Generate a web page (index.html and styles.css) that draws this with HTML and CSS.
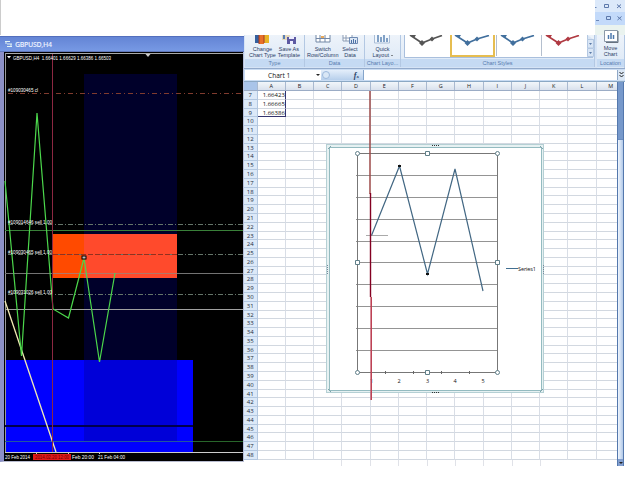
FILE: index.html
```html
<!DOCTYPE html>
<html lang="en">
<head>
    <meta charset="UTF-8">
    <meta name="viewport" content="width=device-width, initial-scale=1.0">
    <title>GBPUSD,H4 - Chart 1</title>
    <link rel="stylesheet" href="styles.css">
</head>
<body>

    <div class="top">
        <div class="corner">
            <svg width="30" height="35" viewBox="595 0 30 35">
                <rect x="595" y="0" width="30" height="12" fill="#dce9fa"/>
                <rect x="595" y="12" width="30" height="13" fill="#c3dafa"/>
                <rect x="595" y="25" width="30" height="10" fill="#eaf3ef"/>
                <path d="M595 7.500h1.500M596 20.500h3" stroke="#6c87b8"/>
                <g fill="none" stroke="#5c78ab">
                    <path d="M604.500 4.500h4v3h-4zM617 4.500l4 3.500m0-3.500l-4 3.500"/>
                    <path d="M606.500 16.500h4v3h-4zM617.500 16.500l4 3.500m0-3.500l-4 3.500"/>
                </g>
            </svg>
        </div>
    </div>

    <div class="desktop">
        <div class="terminal">
            <div class="terminal-title">
                <svg width="8" height="8" viewBox="0 0 8 8"><path d="M0 1.500h5M2 4h5M2 6.500h5M1 1v3M6 4v3" stroke="#e4f4f4" fill="none"/></svg>
                <span>GBPUSD,H4</span>
            </div>
            <svg class="forex" width="239" height="409" viewBox="4 52 239 409">
                <rect x="4" y="52" width="239" height="410" fill="#000"/>
                <rect x="84" y="74" width="93" height="287" fill="#00002a"/>
                <rect x="5" y="360" width="188" height="92" fill="#0000ff"/>
                <rect x="84" y="360" width="93" height="81" fill="#0000d8"/>
                <rect x="53" y="234" width="31" height="44" fill="#ff4a00"/>
                <rect x="84" y="234" width="93" height="44" fill="#ff4a2c"/>
                <path d="M5 53.500H243" stroke="#aaa"/>
                <path d="M5.500 53V452" stroke="#999"/>
                <path d="M145.500 54h5l-2.500 3z" fill="#ccc"/>
                <path d="M7 56h4l-2 2.500z" fill="#fff"/>
                <path d="M5 426H193" stroke="#00004c" stroke-width="2"/>
                <path d="M5 441.500H193" stroke="#24579d"/>
                <path d="M193 441.500H243" stroke="#28652a"/>
                <path d="M5 230.500H243" stroke="#398039"/>
                <path d="M5 273.500H243" stroke="#737373"/>
                <path d="M53 273.500H177" stroke="#b37768"/>
                <path d="M5 309.500H243" stroke="#a0a0a0"/>
                <path d="M8 93.500H243" stroke="#803b2e" stroke-dasharray="5 3 1 3"/>
                <path d="M8 224.500H243M8 254.500H243M8 294.500H243" stroke="#65756a" stroke-dasharray="5 2 1 2"/>
                <path d="M53 254.500H177" stroke="#91301e" stroke-dasharray="5 2"/>
                <path d="M5 301L56 452" stroke="#f2ebb4" stroke-width="1.300" fill="none"/>
                <path d="M5 181L21.500 356L37 113L53 309L68.500 318L84 258L99.500 362L115 273" stroke="#4cd84c" stroke-width="1.200" fill="none"/>
                <path d="M52.500 54V452" stroke="#8c2842"/>
                <rect x="82" y="256" width="4" height="3" fill="#bbb" stroke="#000"/>
                <path d="M5 452.500H243" stroke="#ccc"/>
                <path d="M36.500 452v2M68.500 452v2M99.500 452v2" stroke="#ccc"/>
                <g class="forex-text">
                    <text x="13" y="59.500" textLength="98" lengthAdjust="spacingAndGlyphs">GBPUSD,H4&#160; 1.66401 1.66629 1.66386 1.66503</text>
                    <text x="8" y="92" textLength="30" lengthAdjust="spacingAndGlyphs">#109030465 cl</text>
                    <text x="8" y="223.500" textLength="44" lengthAdjust="spacingAndGlyphs">#109014646 sell 1.00</text>
                    <text x="8" y="253.500" textLength="44" lengthAdjust="spacingAndGlyphs">#109030465 sell 1.00</text>
                    <text x="8" y="293.500" textLength="44" lengthAdjust="spacingAndGlyphs">#109031026 sell 1.00</text>
                    <text x="5" y="459" textLength="25" lengthAdjust="spacingAndGlyphs">20 Feb 2014</text>
                    <text x="72" y="459" textLength="22" lengthAdjust="spacingAndGlyphs">Feb 20:00</text>
                    <text x="98" y="459" textLength="27" lengthAdjust="spacingAndGlyphs">21 Feb 04:00</text>
                </g>
                <rect x="33" y="454" width="38" height="6" fill="#e01818"/>
                <text class="forex-date" x="35" y="459" textLength="34" lengthAdjust="spacingAndGlyphs">2014.02.20 12:00</text>
            </svg>
        </div>

        <div class="excel">
            <div class="ribbon">
                <div class="group type">
                    <div class="tools">
                        <div class="tool">
                            <svg width="16" height="9" viewBox="0 0 16 9"><path d="M1 0h4v8H1z" fill="#35609e"/><path d="M5 0h5v9H5z" fill="#e8702a"/><path d="M10 0h5v8h-5z" fill="#e8b427"/><path d="M5 0v9M10 0v8" stroke="#a33a25"/></svg>
                            <span>Change<br>Chart Type</span>
                        </div>
                        <div class="tool">
                            <svg width="16" height="9" viewBox="0 0 16 9"><path d="M1 0h8v5H1z" fill="#e5d9bd"/><path d="M2 0h2v4H2z" fill="#5b7fb5"/><path d="M6 2h9v7H6z" fill="#5d5aa3"/><path d="M8 2h5v2H8zM9 6h3v3H9z" fill="#eef"/></svg>
                            <span>Save As<br>Template</span>
                        </div>
                    </div>
                    <div class="group-name">Type</div>
                </div>
                <div class="group data">
                    <div class="tools">
                        <div class="tool">
                            <svg width="16" height="9" viewBox="0 0 16 9"><path d="M1 0v7h14V0M1 3.500h14M5 0v7M10 0v7" stroke="#7388a6" fill="#fff"/><path d="M6 1h3v2H6z" fill="#e8a95b"/></svg>
                            <span>Switch<br>Row/Column</span>
                        </div>
                        <div class="tool">
                            <svg width="16" height="9" viewBox="0 0 16 9"><path d="M1 0v6h9V0M1 3h9M4 0v6" stroke="#8b9cb5" fill="#fff"/><path d="M7.500 2.500h8v6h-8z" fill="#dbe6f4" stroke="#6f8bb3"/><path d="M9.500 8V5M11.500 8V4M13.500 8V5" stroke="#4a70a5"/></svg>
                            <span>Select<br>Data</span>
                        </div>
                    </div>
                    <div class="group-name">Data</div>
                </div>
                <div class="group layouts">
                    <div class="tools">
                        <div class="tool">
                            <svg width="16" height="9" viewBox="0 0 16 9"><path d="M.5 0v8h15V0" stroke="#a9bdd6" fill="#f3f8fd"/><path d="M4 0v7M7 2v5M10 0v7M13 3v4" stroke="#5c84b4" stroke-width="1.500"/></svg>
                            <span>Quick<br>Layout <i class="arrow"></i></span>
                        </div>
                    </div>
                    <div class="group-name">Chart Layo...</div>
                </div>
                <div class="group styles">
                    <div class="gallery">
                        <svg width="190" height="24" viewBox="404 34 190 24">
                            <path d="M404.500 34v22.500H593" stroke="#a9bfdd" fill="none"/>
                            <rect x="405" y="34" width="182" height="22" fill="#fff"/>
                            <path d="M496.500 34v21M541.500 34v21" stroke="#b4bfce"/>
                            <path d="M451 34v21h43V34" stroke="#e6bd50" stroke-width="2" fill="#fff"/>
                            <g fill="none" stroke-width="1.700">
                                <path d="M410 34L422 42L432 38L442 34.500" stroke="#555"/>
                                <path d="M455 34L467.500 42L477 38L489 34.500" stroke="#416f9d"/>
                                <path d="M501 34L513 42L522.500 38L534 34.500" stroke="#416f9d"/>
                                <path d="M546 34L558.500 42L568 38L579 34.500" stroke="#b03a42"/>
                            </g>
                            <path d="M422 39l3 3-3 3-3-3zM432 35.500l2.500 2.500-2.500 2.500-2.500-2.500zM411 34h5l-2 3z" fill="#555"/>
                            <path d="M467.500 39l3 3-3 3-3-3zM477 35.500l2.500 2.500-2.500 2.500-2.500-2.500zM456 34h5l-2 3zM513 39l3 3-3 3-3-3zM522.500 35.500l2.500 2.500-2.500 2.500-2.500-2.500zM502 34h5l-2 3z" fill="#416f9d"/>
                            <path d="M558.500 39l3 3-3 3-3-3zM568 35.500l2.500 2.500-2.500 2.500-2.500-2.500zM547 34h5l-2 3z" fill="#b03a42"/>
                            <path d="M587.500 34v4.500h6M587.500 38.500h6v8.500h-6zM587.500 47.500h6v8h-6z" fill="#d8e5f5" stroke="#b4c8e2"/>
                            <path d="M589 42h3l-1.500 2zM589 51h3l-1.500 2z" fill="#5a7aa8"/>
                        </svg>
                    </div>
                    <div class="group-name">Chart Styles</div>
                </div>
                <div class="group location">
                    <div class="tool">
                        <svg width="16" height="16" viewBox="0 0 16 16"><path d="M1.500 2.500h13v11h-13z" fill="#fff" stroke="#8a98a8"/><path d="M15 3v11.500H3" stroke="#67727f" fill="none"/><path d="M5.500 11V7M8 11V5M10.500 11V7" stroke="#4d78ad" stroke-width="1.500"/></svg>
                        <span>Move<br>Chart</span>
                    </div>
                    <div class="group-name">Location</div>
                </div>
            </div>

            <div class="formula-bar">
                <div class="name-box"><span>Chart 1</span><i class="arrow"></i></div>
                <div class="fx"><i class="knob"></i><em>f<small>x</small></em></div>
                <div class="formula"></div>
                <div class="expand">
                    <svg width="7" height="10" viewBox="0 0 7 10"><path d="M1.500 2l2 2 2-2M1.500 5l2 2 2-2" stroke="#222" fill="none"/></svg>
                </div>
            </div>

            <div class="book">
                <div class="sheet">
                    <div class="columns">
                        <span class="select-all"></span>
                        <span>A</span><span>B</span><span>C</span><span>D</span><span>E</span><span>F</span><span>G</span><span>H</span><span>I</span><span>J</span><span>K</span><span>L</span><span class="last">M</span>
                    </div>
                    <div class="rows" id="rows"></div>
                    <svg class="chart" width="228" height="380" viewBox="320 88 228 380">
                        <path d="M341.500 460v7M370.500 460v7M398.500 460v7M427.500 460v7M455.500 460v7M483.500 460v7M512.500 460v7M540.500 460v7" stroke="#e0e2e8"/>
                        <path d="M341 466.500h207" stroke="#dcdde0"/>
                        <rect x="326.500" y="144.500" width="217" height="248" fill="#e6f1f2" stroke="#b5d0d4"/>
                        <rect x="329.500" y="147.500" width="212" height="243" fill="#fff" stroke="#94bbc0"/>
                        <path d="M328 149l3-3M540 146l3 3M328 389l3 3M540 392l3-3" stroke="#7fa4aa"/>
                        <path d="M432 145.500h8M432 392.500h8" stroke="#333" stroke-dasharray="1 1"/>
                        <path d="M327.500 265v9M543.500 265v9" stroke="#789" stroke-dasharray="1 1"/>
                        <path d="M356 175.500H497M356 197.500H497M356 219.500H497M356 241.500H497M356 262.500H497M356 284.500H497M356 306.500H497M356 328.500H497M356 350.500H497" stroke="#949494"/>
                        <rect x="357.500" y="153.500" width="140" height="219" fill="none" stroke="#777"/>
                        <path d="M385.500 371v3M413.500 371v3M441.500 371v3M469.500 371v3" stroke="#666"/>
                        <path d="M366 235.500h22" stroke="#aaa"/>
                        <path d="M371.500 235.500L399.500 166L427.500 274L455 169L483 291" stroke="#426783" stroke-width="1.200" fill="none"/>
                        <path d="M398 165h3v2h-3zM426 273h3v2h-3z" fill="#111"/>
                        <g fill="#fff" stroke="#607f89">
                            <circle cx="357.500" cy="153.500" r="2"/><circle cx="497.500" cy="153.500" r="2"/>
                            <circle cx="357.500" cy="372.500" r="2"/><circle cx="497.500" cy="372.500" r="2"/>
                            <path d="M425.500 151.500h4v4h-4zM425.500 370.500h4v4h-4zM355.500 260.500h4v4h-4zM495.500 260.500h4v4h-4z"/>
                        </g>
                        <path d="M506 268.500h12" stroke="#426f91"/>
                        <g class="chart-text">
                            <text x="518" y="270.500" textLength="18">Series1</text>
                            <text x="370" y="383">1</text><text x="397.500" y="383">2</text><text x="426" y="383">3</text><text x="453.500" y="383">4</text><text x="481.500" y="383">5</text>
                        </g>
                        <path d="M370 91V194" stroke="#9c4a48" stroke-width="1.500"/>
                        <path d="M370.500 193V297" stroke="#830022" stroke-width="1.400"/>
                        <path d="M371.200 297V400" stroke="#bd4255" stroke-width="1.600"/>
                    </svg>
                </div>
                <div class="scrollbar">
                    <div class="thumb"></div>
                    <div class="down"><i class="arrow"></i></div>
                </div>
            </div>
        </div>
    </div>

    <script src="script.js"></script>
</body>
</html>
```
FILE: styles.css
```css
* {
    box-sizing: border-box;
}

body {
    margin: 0;
    width: 625px;
    height: 500px;
    overflow: hidden;
    background-color: #fff;
    font-family: "Open Sans", "Noto Sans", sans-serif;
}

svg {
    display: block;
}

.top {
    display: flex;
    justify-content: flex-end;
    height: 35px;
    border-left: 1px solid #ccc;
}

.desktop {
    display: flex;
    align-items: flex-start;
}

/* trading terminal */
.terminal {
    width: 244px;
    margin-top: 1px;
    padding-right: 1px;
    border-left: 4px solid #8c90c6;
    border-bottom: 1px solid #b8bcd0;
    background-color: #b6c0dc;
}

.terminal-title {
    display: flex;
    align-items: center;
    gap: 2px;
    height: 16px;
    margin-left: -4px;
    margin-right: -1px;
    padding-left: 5px;
    border-top: 1px solid #536fbd;
    border-bottom: 1px solid #6077bb;
    background: linear-gradient(#6485d5, #7799e4);
    color: #edf2ff;
    font-size: 7px;
    font-weight: 600;
    letter-spacing: -0.3px;
}

.forex-text {
    fill: #fff;
    font-family: "Liberation Sans", Arial, sans-serif;
    font-size: 5.6px;
}

.forex-date {
    fill: #6d0000;
    font-family: "Liberation Sans", Arial, sans-serif;
    font-size: 5px;
}

/* spreadsheet */
.excel {
    width: 381px;
}

.ribbon {
    display: flex;
    height: 33px;
    padding-left: 1px;
    background-color: #d5e3f5;
    color: #2c4066;
    font-family: "Liberation Sans", Arial, sans-serif;
    font-size: 5.5px;
    line-height: 6px;
    text-align: center;
}

.group {
    display: flex;
    flex: none;
    flex-direction: column;
    justify-content: space-between;
    height: 32px;
    border-right: 1px solid #b3c8e3;
    background: linear-gradient(#edf3fa, #dce8f6);
    white-space: nowrap;
}

.group-name {
    height: 8px;
    line-height: 8px;
    background-color: #c5daf3;
    color: #587bae;
}

.tools {
    display: flex;
    justify-content: space-between;
}

.tool {
    display: flex;
    flex-direction: column;
    align-items: center;
    gap: 2px;
}

.type {
    width: 60px;
}

.type .tools {
    padding: 0 4px;
}

.data {
    width: 60px;
}

.data .tools {
    padding: 0 6px 0 2px;
}

.layouts {
    width: 36px;
}

.layouts .tools {
    justify-content: center;
}

.styles {
    width: 194px;
}

.gallery {
    height: 24px;
    padding-left: 3px;
}

.location {
    width: 28px;
    height: 33px;
    margin-left: 2px;
    padding-bottom: 1px;
}

.location .tool {
    margin-top: -7px;
    gap: 0;
}

.location .tool svg {
    margin-bottom: 1px;
}

.formula-bar {
    display: flex;
    height: 14px;
    padding: 1px 0 1px 1px;
    border-top: 1px solid #93aacb;
    border-bottom: 1px solid #8ba8c4;
    background-color: #c9dcf3;
}

.name-box {
    display: flex;
    align-items: center;
    justify-content: space-between;
    width: 76px;
    padding: 0 1px 0 23px;
    background-color: #fff;
    color: #111;
    font-size: 6.6px;
}

.arrow {
    display: inline-block;
    border: 2px solid transparent;
    border-top-color: #222;
    border-bottom: 0;
}

.layouts .arrow {
    border-width: 1.5px;
    border-bottom: 0;
    vertical-align: 1px;
}

.fx {
    display: flex;
    align-items: center;
    justify-content: space-between;
    width: 43px;
    padding: 0 4px 0 1px;
    border-right: 1px solid #85a5cb;
    background: linear-gradient(#e4eefa, #b7cfeb);
    color: #263f66;
    font-family: "Liberation Serif", serif;
    font-size: 8px;
    font-weight: bold;
}

.fx small {
    font-size: 5px;
}

.knob {
    width: 8px;
    height: 8px;
    border: 1px solid #9db9dc;
    border-radius: 50%;
    background-color: #d9e7f6;
}

.formula {
    flex: 1;
    background-color: #fff;
}

.expand {
    width: 8px;
    border-left: 1px solid #8fa8c7;
    background-color: #dbe7f5;
}

.book {
    display: flex;
    height: 384px;
}

.sheet {
    position: relative;
    width: 373px;
    overflow: hidden;
}

.columns {
    display: flex;
    height: 9px;
    border-bottom: 1px solid #9bacc5;
    background: linear-gradient(#f2f6fa, #d9e1ed);
    color: #222;
    font-size: 5.5px;
    line-height: 8px;
    text-align: center;
}

.columns span {
    flex: none;
    width: 28.26px;
    border-right: 1px solid #a9b9d0;
}

.columns .select-all {
    width: 13.6px;
    background-color: #a9c4e9;
}

.columns .last {
    border-right: 0;
}

.row {
    display: flex;
    height: 8.79px;
    color: #111;
    font-size: 6px;
    line-height: 8px;
}

.row span {
    flex: none;
    width: 28.26px;
    border-right: 1px solid #d9dee6;
    border-bottom: 1px solid #d2d8e0;
    text-align: right;
}

.row .number {
    width: 13.6px;
    border-color: #b2c7e0;
    background-color: #dce9f8;
    color: #222c3d;
    text-align: center;
}

.row .filled {
    border-right-color: #34346e;
}

.row .filled.end {
    border-bottom-color: #34346e;
}

.chart {
    position: absolute;
    left: 76px;
    top: 6px;
}

.chart-text {
    fill: #111;
    font-size: 5.5px;
}

.scrollbar {
    display: flex;
    flex-direction: column;
    width: 7px;
    padding-top: 57px;
    border-left: 1px solid #5478ad;
    border-right: 1px solid #5478ad;
    background-color: #7799cb;
}

.thumb {
    flex: 1;
    background: linear-gradient(90deg, #f0f6fd, #b2c9e8);
    border-top: 1px solid #6a8dbf;
}

.down {
    display: flex;
    align-items: center;
    justify-content: center;
    height: 7px;
    background-color: #829fd0;
}
```
FILE: script.js
```js
const values = { 7: '1.66423', 8: '1.66665', 9: '1.66386' };
const rows = document.getElementById('rows');

for (let n = 7; n <= 48; n++) {
    const row = document.createElement('div');
    row.className = 'row';
    row.innerHTML = '<span class="number">' + n + '</span>';

    for (let c = 0; c < 13; c++) {
        const cell = document.createElement('span');
        if (c === 0 && values[n]) {
            cell.className = n === 9 ? 'filled end' : 'filled';
            cell.textContent = values[n];
        }
        row.appendChild(cell);
    }
    rows.appendChild(row);
}
```
